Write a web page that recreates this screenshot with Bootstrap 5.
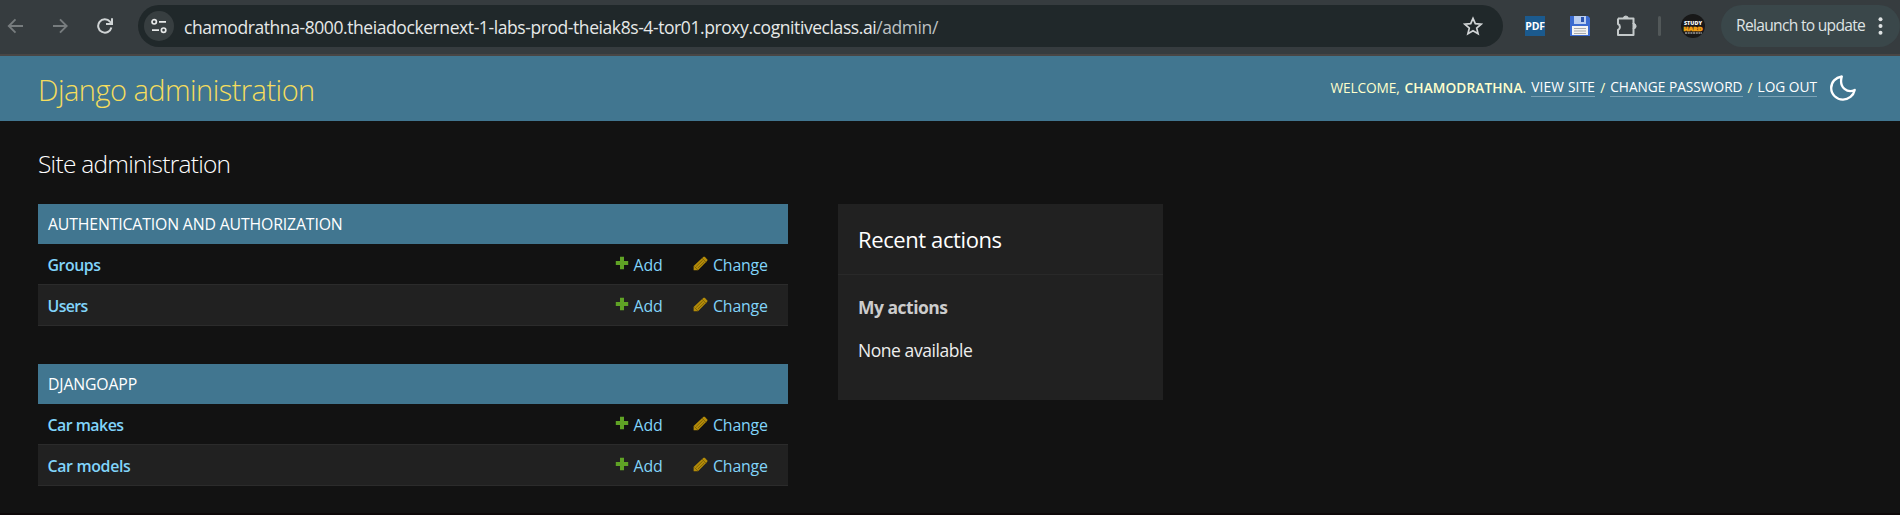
<!DOCTYPE html>
<html lang="en" data-bs-theme="dark">
<head>
<meta charset="utf-8">
<meta name="viewport" content="width=device-width, initial-scale=1">
<title>Site administration | Django site admin</title>
<link href="https://cdn.jsdelivr.net/npm/bootstrap@5.3.0/dist/css/bootstrap.min.css" rel="stylesheet">
<style>
body{background:#121212;color:#eee;font-family:"Open Sans","Noto Sans",sans-serif;font-size:17.5px;height:515px;overflow:hidden;border-bottom:2px solid #0d0809}
a{color:#81d4fa;text-decoration:none}
svg{display:block;flex:none}
/* browser bar */
.toolbar{height:56px;background:#363c3f;border-bottom:2px solid #494645;padding:5px 0 7px 8px}
.toolbar .nav-icons{width:130px;gap:29px;margin-left:-1px;margin-right:1px}
.omnibox{width:1366px;height:42px;background:#20282a;border-radius:21px;padding:0 20px 0 6px}
.site-info{width:30px;height:30px;background:#373e40;margin-right:10px}
.url{color:#e6e8e8;letter-spacing:-.418px;line-height:42px;white-space:nowrap;padding-top:1px}
.url span{color:#bdc1c2}
.divider{width:3px;height:20px;background:#525859;border-radius:2px;margin-left:20px}
.pdf-icon{width:20px;height:20px;background:#1b5a8e;color:#fff;font-size:10.5px;line-height:20px;letter-spacing:-.1px;margin-left:22px}
.relaunch{width:179px;height:42px;margin-left:16px;background:#3a474a;border-radius:21px;color:#dfe3e4;font-size:15.6px;letter-spacing:-.712px;padding:0 17px 0 15px;white-space:nowrap}
/* site header */
.site-header{height:65px;background:#417690;padding:0 44px 0 39px}
.site-header h1{font-size:29px;font-weight:300;line-height:34px;letter-spacing:-.53px;color:#f5dd5d;margin:3px 0 0 -1px}
.user-tools{font-size:13.7px;line-height:18px;color:#ffc;padding-bottom:2px;white-space:nowrap}
.user-tools a{color:#fff;border-bottom:1px solid #7ba2b5;line-height:18px;display:block}
.user-tools .welcome{letter-spacing:-.141px;margin-right:5px}
.user-tools strong{font-weight:600;letter-spacing:.082px}
.slash{width:15px;text-align:center}
/* content */
.page{padding:26px 38px 0}
.page>h2{font-size:24.5px;font-weight:300;line-height:34px;letter-spacing:-.74px;margin:0 0 23px}
.main-col{width:750px;margin-right:50px}
.app-list{font-size:15.9px;margin-bottom:38px}
.app-list h3{height:40px;line-height:41px;background:#417690;color:#fff;font-size:15.8px;font-weight:400;letter-spacing:-.14px;padding:0 10px;margin:0}
.model{height:40px;padding:2px 20px 0 10px;line-height:38px}
.model.alt{height:42px;background:#212121;border-top:1px solid #2b2b2b;border-bottom:1px solid #2b2b2b}
.model .name{font-weight:600;margin-left:-.5px}
.model .add{width:78px;letter-spacing:-.1px;margin-right:.5px}
.model .change{width:74px;letter-spacing:-.18px}
.model svg{margin-bottom:4px;margin-left:-1px;margin-right:1px}
.recent{width:325px;height:196px;background:#212121}
.recent h2{height:71px;line-height:71px;font-size:22px;letter-spacing:-.4px;font-weight:400;padding-left:20px;margin:0;border-bottom:1px solid #292929}
.recent h3{font-size:17.5px;line-height:24px;font-weight:700;letter-spacing:-.505px;color:#ccc;margin:20px 0 19px 20px}
.recent p{line-height:24px;letter-spacing:-.44px;margin:0 0 0 20px}
</style>
</head>
<body>
<svg class="d-none" xmlns="http://www.w3.org/2000/svg">
  <symbol id="plus" viewBox="0 0 14 14"><path d="M5 .8h4V5h4.200v4H9v4.200H5V9H.8V5H5z" fill="#5fa225"/></symbol>
  <symbol id="pencil" viewBox="0 0 15 15"><path d="M.6 14.300V10L10.500.8h1.300l2.500 2.600v1.300L5 14.300z" fill="#b48c08"/><path d="M3.200 10.500l6.500-6.300M4.900 12l6.500-6.200M9.200 2.200l3.800 4M1.500 10.500l3.300 3.400" stroke="#705507" stroke-width=".8" fill="none"/></symbol>
</svg>

<div class="toolbar d-flex align-items-center">
  <div class="nav-icons d-flex align-items-center">
    <svg width="16" height="16" viewBox="0 0 16 16" fill="none" stroke="#777c7e" stroke-width="1.900"><path d="M16 8H2.200M8.500 1.300L1.800 8l6.700 6.700"/></svg>
    <svg width="16" height="16" viewBox="0 0 16 16" fill="none" stroke="#777c7e" stroke-width="1.900"><path d="M1 8h13.200M8 1.300L14.700 8 8 14.700"/></svg>
    <svg width="16" height="16" viewBox="0 0 16 16" fill="none" stroke="#d0d4d5" stroke-width="2"><path d="M14.400 9.500A6.700 6.700 0 1 1 13 3.600L14.500 5.200M15 .3v5.800H9"/></svg>
  </div>
  <div class="omnibox d-flex align-items-center">
    <div class="site-info rounded-circle d-flex align-items-center justify-content-center">
      <svg width="16" height="16" viewBox="0 0 16 16" fill="none" stroke="#e6e8e8" stroke-width="1.700"><circle cx="3.200" cy="3.800" r="2.200"/><path d="M8 3.800h7M1 12.200h7"/><circle cx="12.600" cy="12.200" r="2.200"/></svg>
    </div>
    <div class="url flex-grow-1">chamodrathna-8000.theiadockernext-1-labs-prod-theiak8s-4-tor01.proxy.cognitiveclass.ai<span>/admin/</span></div>
    <svg width="20" height="20" viewBox="0 0 20 20" fill="none" stroke="#d0d4d5" stroke-width="1.700"><path d="M10 2.300l2.300 5.400 5.900.5-4.500 3.900 1.400 5.700-5.100-3-5.100 3 1.400-5.700L1.800 8.200l5.900-.5z"/></svg>
  </div>
  <div class="pdf-icon fw-bold text-center">PDF</div>
  <svg class="ms-4" width="22" height="22" viewBox="0 0 22 22"><path d="M1 1h18l2 2v18H1z" fill="#3b6bd0"/><path d="M5 1h12v8H5z" fill="#b9cdf0"/><path d="M12 2h3v5h-3z" fill="#2a52ac"/><path d="M3 11h16v9H3z" fill="#f2f2f2"/><path d="M5 13.500h12M5 16h12M5 18.500h12" stroke="#a9a9a9"/></svg>
  <svg width="22" height="22" viewBox="0 0 22 22" fill="none" stroke="#c4c9ca" stroke-width="2" stroke-linejoin="round" style="margin-left:25px"><path d="M2 3.500h15.500V9M17.500 13.500V20H2v-5a3.300 3.300 0 0 0 0-6V3.500"/><path d="M7.300 3.500a2.500 2.500 0 0 1 5 0zM17.500 8.600a2.600 2.600 0 0 1 0 5.200z" fill="#c4c9ca"  stroke-width="1"/><path d="M17.500 8v6"/></svg>
  <div class="divider"></div>
  <svg width="24" height="26" viewBox="0 0 24 26" style="margin-left:20px"><circle cx="12" cy="13" r="12" fill="#181818"/><g font-family="Open Sans" font-weight="800" text-anchor="middle"><text x="12" y="11.500" font-size="5" fill="#fff" textLength="18" lengthAdjust="spacingAndGlyphs">STUDY</text><text x="12" y="18.300" font-size="5" fill="#f5a313" stroke="#f5a313" stroke-width=".5" textLength="19" lengthAdjust="spacingAndGlyphs">HARD</text></g><path d="M4 20h17" stroke="#ddd" stroke-dasharray="2 .7"/></svg>
  <div class="relaunch d-flex align-items-center justify-content-between"><span>Relaunch to update</span>
    <svg width="5" height="18" viewBox="0 0 5 18" fill="#dfe3e4"><circle cx="2.500" cy="2.200" r="2"/><circle cx="2.500" cy="9" r="2"/><circle cx="2.500" cy="15.800" r="2"/></svg>
  </div>
</div>

<header class="site-header d-flex align-items-center justify-content-between">
  <h1>Django administration</h1>
  <div class="user-tools d-flex align-items-center">
    <span class="welcome">WELCOME,</span><strong>CHAMODRATHNA</strong><span style="margin-right:5px">.</span>
    <a href="#" style="letter-spacing:.193px">VIEW SITE</a><span class="slash">/</span>
    <a href="#">CHANGE PASSWORD</a><span class="slash">/</span>
    <a href="#">LOG OUT</a>
    <svg width="26" height="26" viewBox="0 0 26 26" fill="none" stroke="#fff" stroke-width="2.300" stroke-linejoin="round" style="margin-left:13px"><path d="M11.800 1.500C5.500 2.500 1.200 7 1.200 13A11.600 11.600 0 0 0 13 24.600C18.500 24.600 23.500 20.800 24.700 15 18 18.500 8.500 13 11.800 1.500z"/></svg>
  </div>
</header>

<main class="page">
  <h2>Site administration</h2>
  <div class="d-flex align-items-start">
    <div class="main-col">
      <section class="app-list">
        <h3>AUTHENTICATION AND AUTHORIZATION</h3>
        <div class="model d-flex align-items-center"><a href="#" class="name me-auto" style="letter-spacing:-.469px">Groups</a>
          <a href="#" class="add d-flex align-items-center gap-1"><svg width="14" height="14"><use href="#plus"/></svg>Add</a>
          <a href="#" class="change d-flex align-items-center gap-1"><svg width="15" height="15"><use href="#pencil"/></svg>Change</a></div>
        <div class="model alt d-flex align-items-center"><a href="#" class="name me-auto" style="letter-spacing:-.659px">Users</a>
          <a href="#" class="add d-flex align-items-center gap-1"><svg width="14" height="14"><use href="#plus"/></svg>Add</a>
          <a href="#" class="change d-flex align-items-center gap-1"><svg width="15" height="15"><use href="#pencil"/></svg>Change</a></div>
      </section>
      <section class="app-list">
        <h3>DJANGOAPP</h3>
        <div class="model d-flex align-items-center"><a href="#" class="name me-auto" style="letter-spacing:-.517px">Car makes</a>
          <a href="#" class="add d-flex align-items-center gap-1"><svg width="14" height="14"><use href="#plus"/></svg>Add</a>
          <a href="#" class="change d-flex align-items-center gap-1"><svg width="15" height="15"><use href="#pencil"/></svg>Change</a></div>
        <div class="model alt d-flex align-items-center"><a href="#" class="name me-auto" style="letter-spacing:-.336px">Car models</a>
          <a href="#" class="add d-flex align-items-center gap-1"><svg width="14" height="14"><use href="#plus"/></svg>Add</a>
          <a href="#" class="change d-flex align-items-center gap-1"><svg width="15" height="15"><use href="#pencil"/></svg>Change</a></div>
      </section>
    </div>
    <aside class="recent">
      <h2>Recent actions</h2>
      <h3>My actions</h3>
      <p>None available</p>
    </aside>
  </div>
</main>
<script src="https://cdn.jsdelivr.net/npm/bootstrap@5.3.0/dist/js/bootstrap.bundle.min.js"></script>
</body>
</html>
